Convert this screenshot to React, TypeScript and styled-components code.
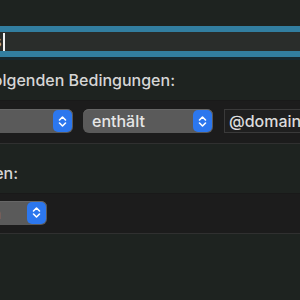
import React from 'react';
import styled, { createGlobalStyle } from 'styled-components';

const GlobalStyle = createGlobalStyle`
  html, body {
    margin: 0;
    padding: 0;
    background: #1e2320;
  }
`;

const Canvas = styled.div`
  width: 300px;
  height: 300px;
  overflow: hidden;
  background: #1e2320;
  font-family: Inter, 'Noto Sans', sans-serif;
  font-size: 16px;
  font-weight: 500;
  color: #d9d9d9;
  display: flex;
  flex-direction: column;
`;

const NameRing = styled.div`
  margin-top: 26px;
  margin-left: -20px;
  width: 360px;
  flex-shrink: 0;
  box-sizing: border-box;
  border-top: 6px solid #327ea0;
  border-bottom: 6px solid #327ea0;
  box-shadow: inset 0 1px 0 #296683, inset 0 -1px 0 #296683, 0 3px 0 #17282f;
`;

const NameField = styled.div`
  height: 19px;
  background: #2a2d2b;
  display: flex;
  align-items: center;
  padding-left: 20px;
`;

const FieldText = styled.span`
  margin-left: -7px;
  color: #bdbdbd;
  line-height: 19px;
`;

const Caret = styled.span`
  width: 2px;
  height: 18px;
  background: #f2f2f2;
  margin-left: 1px;
`;

const Label = styled.div<{ $right: number }>`
  flex-shrink: 0;
  width: ${(p) => p.$right + 200}px;
  margin-left: -200px;
  text-align: right;
  line-height: 20px;
  white-space: nowrap;
  color: #d6d6d6;
`;

const Band = styled.div<{ $height: number }>`
  flex-shrink: 0;
  height: ${(p) => p.$height}px;
  box-sizing: border-box;
  background: #1c1c1c;
  border-top: 1px solid #191919;
  border-bottom: 1px solid #303030;
  display: flex;
  align-items: center;
  gap: 10px;
  padding-bottom: 2px;
`;

const Popup = styled.div<{ $width: number; $offset?: number }>`
  flex-shrink: 0;
  width: ${(p) => p.$width}px;
  margin-left: ${(p) => p.$offset ?? 0}px;
  height: 24px;
  box-sizing: border-box;
  border-radius: 6px;
  background: #5a5a5a;
  box-shadow: inset 0 1px 0 #666;
  display: flex;
  align-items: center;
  justify-content: space-between;
  padding: 0 1px 0 9px;
  color: #e6e6e6;
`;

const Stepper = styled.div`
  width: 19px;
  height: 22px;
  border-radius: 5px;
  background: #2c77ee;
  display: flex;
  align-items: center;
  justify-content: center;
`;

const TextField = styled.div`
  flex-shrink: 0;
  width: 140px;
  height: 24px;
  margin-left: 1px;
  box-sizing: border-box;
  background: #1f1f1f;
  border: 1px solid #3a3a3a;
  padding-left: 4px;
  display: flex;
  align-items: center;
  color: #dcdcdc;
`;

const Chevrons = () => (
  <svg width="9" height="13" viewBox="0 0 9 13" fill="none">
    <path d="M1.5 5 L4.5 2 L7.5 5" stroke="#fff" strokeWidth="1.6" strokeLinecap="round" strokeLinejoin="round" />
    <path d="M1.5 8 L4.5 11 L7.5 8" stroke="#fff" strokeWidth="1.6" strokeLinecap="round" strokeLinejoin="round" />
  </svg>
);

export default function App() {
  return (
    <Canvas>
      <GlobalStyle />
      <NameRing>
        <NameField>
          <FieldText>s</FieldText>
          <Caret />
        </NameField>
      </NameRing>
      <Label $right={175} style={{ marginTop: 13 }}>der folgenden Bedingungen:</Label>
      <Band $height={44} style={{ marginTop: 10 }}>
        <Popup $width={200} $offset={-127}>
          <span>Von</span>
          <Stepper><Chevrons /></Stepper>
        </Popup>
        <Popup $width={130}>
          <span>enthält</span>
          <Stepper><Chevrons /></Stepper>
        </Popup>
        <TextField>@domain.de</TextField>
      </Band>
      <Label $right={18} style={{ marginTop: 19 }}>ausführen:</Label>
      <Band $height={41} style={{ marginTop: 10 }}>
        <Popup $width={151} $offset={-104}>
          <span>Verschieben</span>
          <Stepper><Chevrons /></Stepper>
        </Popup>
      </Band>
    </Canvas>
  );
}
